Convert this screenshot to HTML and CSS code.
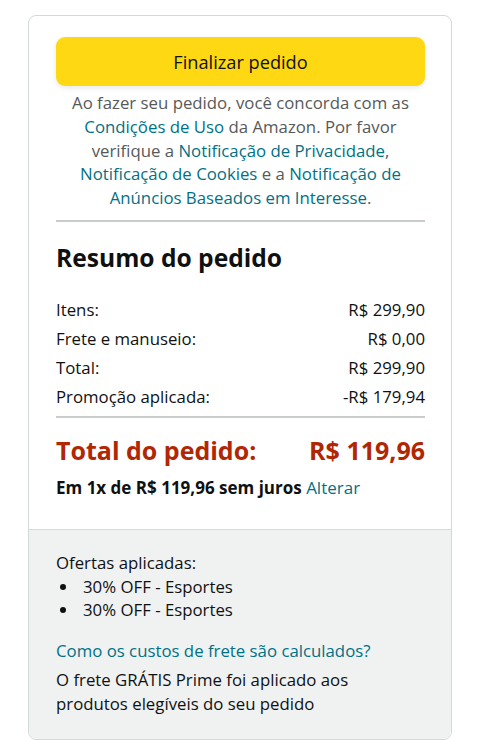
FILE: index.html
```html
<!DOCTYPE html>
<html lang="pt-BR">
<head>
<meta charset="utf-8">
<title>Resumo do pedido</title>
<link rel="stylesheet" href="styles.css">
</head>
<body>
<div class="card">
  <div class="main">
    <button class="btn-primary">Finalizar pedido</button>
    <p class="legal">Ao fazer seu pedido, você concorda com as<br><a href="#">Condições de Uso</a> da Amazon. Por favor<br>verifique a <a href="#">Notificação de Privacidade</a>,<br><a href="#">Notificação de Cookies</a> e a <a href="#">Notificação de</a><br><a href="#">Anúncios Baseados em Interesse</a>.</p>
    <hr class="divider">
    <h2 class="title">Resumo do pedido</h2>
    <div class="rows">
      <div class="row"><span>Itens:</span><span>R$ 299,90</span></div>
      <div class="row"><span>Frete e manuseio:</span><span>R$ 0,00</span></div>
      <div class="row"><span>Total:</span><span>R$ 299,90</span></div>
      <div class="row"><span>Promoção aplicada:</span><span>-R$ 179,94</span></div>
    </div>
    <hr class="divider divider-total">
    <div class="grand"><span>Total do pedido:</span><span>R$ 119,96</span></div>
    <p class="install"><strong>Em 1x de R$ 119,96 sem juros</strong> <a href="#">Alterar</a></p>
  </div>
  <div class="foot">
    <p class="offers-title">Ofertas aplicadas:</p>
    <ul class="offers">
      <li>30% OFF - Esportes</li>
      <li>30% OFF - Esportes</li>
    </ul>
    <a class="ship-link" href="#">Como os custos de frete são calculados?</a>
    <p class="ship-note">O frete GRÁTIS Prime foi aplicado aos<br>produtos elegíveis do seu pedido</p>
  </div>
</div>
</body>
</html>
```

FILE: styles.css
```css
* { box-sizing: border-box; }
html, body { margin: 0; padding: 0; background: #ffffff; }
body {
  font-family: "Open Sans", "Noto Sans", sans-serif;
  color: #0F1111;
  font-size: 16.8px;
  line-height: 23.6px;
}
a { color: #007185; text-decoration: none; }
p { margin: 0; }

.card {
  margin: 15px 0 0 28px;
  width: 424px;
  height: 725px;
  border: 1px solid #D5D9D9;
  border-radius: 8px;
  overflow: hidden;
  display: flex;
  flex-direction: column;
}

.main {
  padding: 21px 26px 30px 27px;
}

.btn-primary {
  display: block;
  width: 100%;
  height: 49px;
  border: 0;
  border-radius: 9px;
  background: #FFD814;
  box-shadow: 0 2px 5px rgba(213, 217, 217, 0.6);
  font-family: inherit;
  font-size: 18.2px;
  color: #0F1111;
  cursor: pointer;
}

.legal {
  margin-top: 5px;
  text-align: center;
  color: #565959;
  font-size: 16.8px;
  line-height: 23.75px;
  white-space: nowrap;
}

.divider {
  margin: 10px 0 0;
  border: 0;
  height: 2px;
  background: #C9CCCC;
}

.title {
  margin: 21px 0 0;
  font-size: 24.6px;
  line-height: 30px;
  font-weight: 700;
}

.rows {
  margin-top: 25px;
  display: flex;
  flex-direction: column;
  gap: 5.5px;
}

.row {
  display: flex;
  justify-content: space-between;
}

.divider-total { margin-top: 7px; }

.grand {
  margin-top: 17px;
  display: flex;
  justify-content: space-between;
  color: #B12704;
  font-size: 25px;
  line-height: 30px;
  font-weight: 700;
}

.install {
  margin-top: 11px;
  font-size: 17px;
}
.install strong { font-weight: 700; }

.foot {
  flex: 1;
  background: #F0F2F2;
  border-top: 1px solid #D5D9D9;
  padding: 21px 26px 0 27px;
}

.offers {
  margin: 0;
  padding: 0;
  list-style: none;
}
.offers li {
  display: flex;
  align-items: center;
}
.offers li::before {
  content: "";
  width: 6px;
  height: 6px;
  border-radius: 50%;
  background: #0F1111;
  margin: 0 17px 0 4px;
  flex: none;
}

.ship-link {
  display: block;
  margin-top: 17px;
}

.ship-note { margin-top: 5.5px; }
```
